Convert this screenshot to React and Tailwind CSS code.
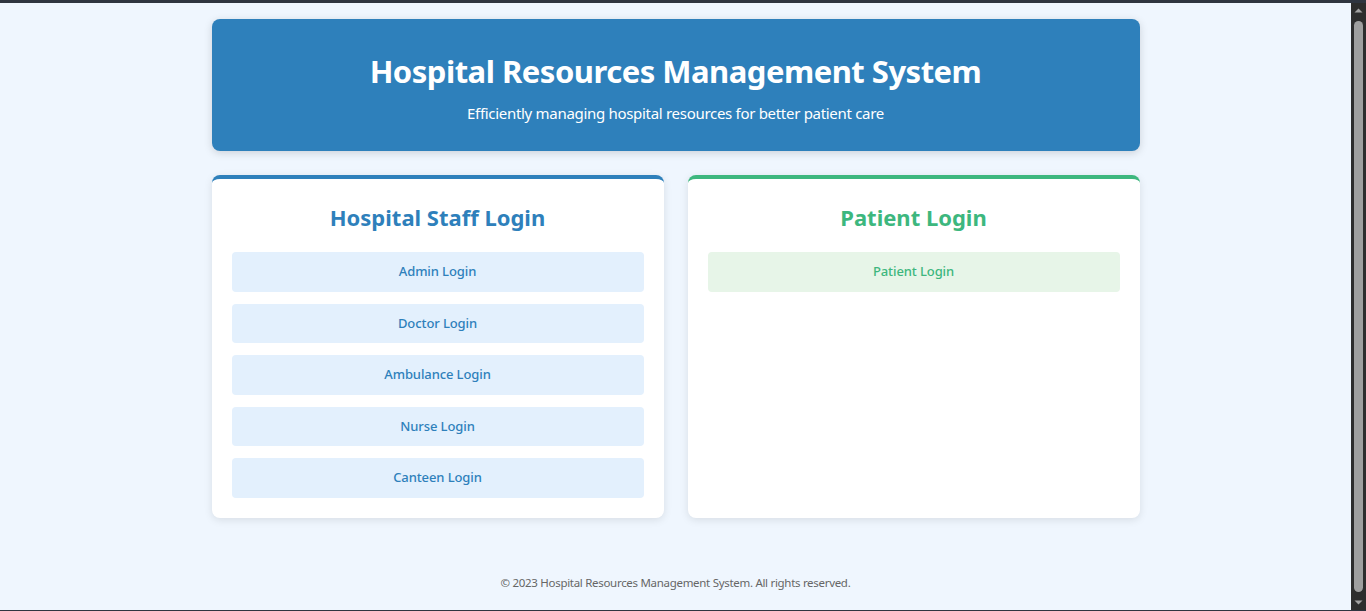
import React from 'react';

const staffLogins = ['Admin Login', 'Doctor Login', 'Ambulance Login', 'Nurse Login', 'Canteen Login'];

// browser-style scrollbar seen at the right edge of the page
const ScrollBar = () => (
  <div className="flex w-[15px] flex-col items-center bg-[#2d2d2d]">
    <svg width="15" height="15" viewBox="0 0 15 15" className="shrink-0">
      <path d="M3.5 9.5 L7.5 5.5 L11.5 9.5 Z" fill="#a3a3a3" />
    </svg>
    <div className="my-[3px] w-[9px] flex-1 rounded-full bg-[#9f9f9f]" />
    <svg width="15" height="15" viewBox="0 0 15 15" className="shrink-0">
      <path d="M3.5 5.5 L7.5 9.5 L11.5 5.5 Z" fill="#a3a3a3" />
    </svg>
  </div>
);

const App = () => {
  return (
    <div className="flex h-screen flex-col bg-[#2f3540] font-['Noto_Sans',sans-serif] text-[#333]">
      <div className="h-[3px] shrink-0" />
      <div className="flex min-h-0 flex-1">
        <div className="flex-1 overflow-hidden bg-[#eff6fe]">
          <div className="mx-auto max-w-[960px] px-4 pt-4">
            <header className="rounded-lg bg-[#2e80bb] pt-[33px] pb-[27px] text-center text-white shadow-[0_2px_8px_rgba(0,0,0,0.15)]">
              <h1 className="text-[31px] font-bold leading-[38px] tracking-[-0.5px]">Hospital Resources Management System</h1>
              <p className="mt-3 text-[15px] leading-[22px] tracking-[-0.3px]">Efficiently managing hospital resources for better patient care</p>
            </header>

            <main className="mt-6 grid grid-cols-2 gap-6">
              <section className="rounded-lg border-t-4 border-[#2e80bb] bg-white p-5 shadow-[0_2px_8px_rgba(0,0,0,0.1)]">
                <h2 className="mb-[17px] text-center text-[22px] font-bold leading-9 text-[#2e80bb]">Hospital Staff Login</h2>
                <div className="flex flex-col gap-3">
                  {staffLogins.map(label => (
                    <button key={label} className="h-[39.6px] rounded bg-[#e3f0fd] text-[13px] font-medium tracking-[-0.1px] text-[#2e80bb]">
                      {label}
                    </button>
                  ))}
                </div>
              </section>

              <section className="rounded-lg border-t-4 border-[#3db77e] bg-white p-5 shadow-[0_2px_8px_rgba(0,0,0,0.1)]">
                <h2 className="mb-[17px] text-center text-[22px] font-bold leading-9 text-[#3db77e]">Patient Login</h2>
                <button className="h-[39.6px] w-full rounded bg-[#e7f5e8] text-[13px] font-medium tracking-[-0.1px] text-[#3db77e]">
                  Patient Login
                </button>
              </section>
            </main>

            <footer className="pt-14 pb-8 text-center text-[11.5px] tracking-[-0.3px] text-[#666]">
              © 2023 Hospital Resources Management System. All rights reserved.
            </footer>
          </div>
        </div>
        <ScrollBar />
      </div>
      <div className="h-px shrink-0" />
    </div>
  );
};

export default App;
